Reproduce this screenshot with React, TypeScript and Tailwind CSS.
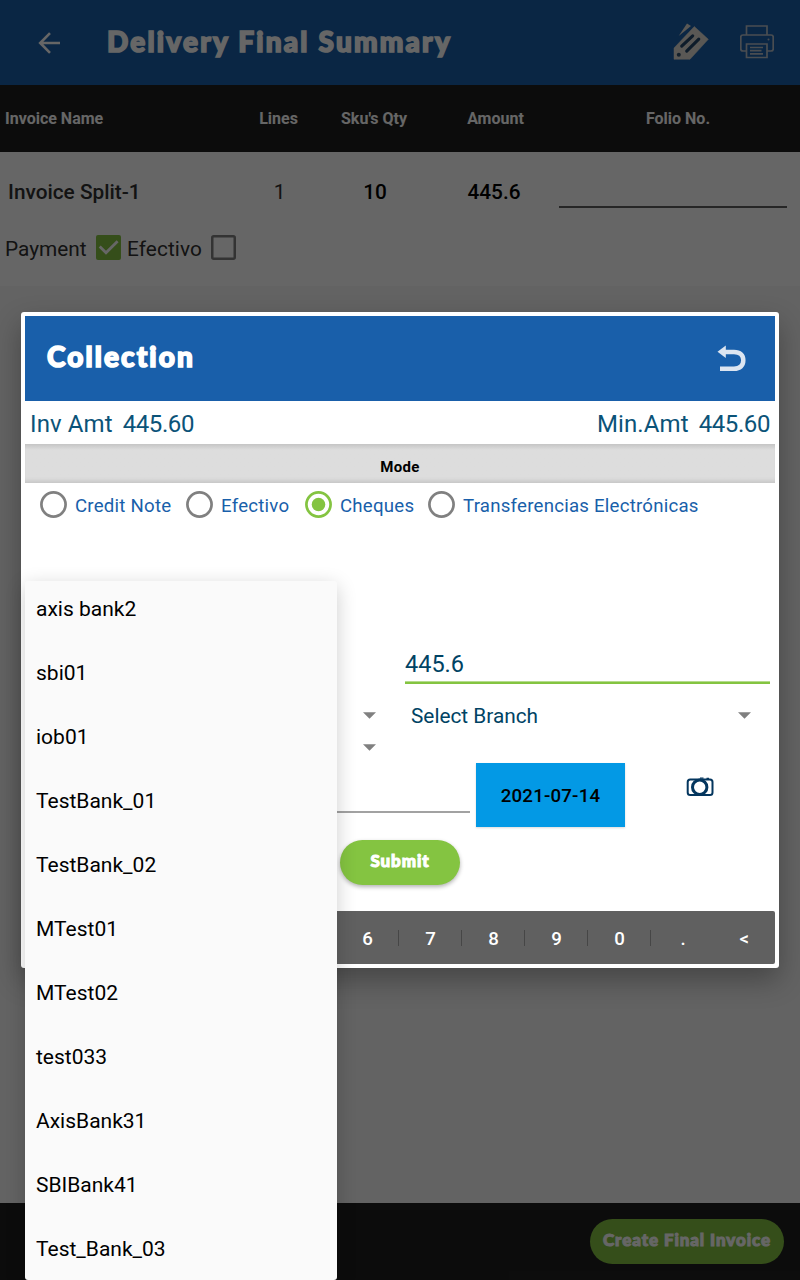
import React from "react";

const banks = [
  "axis bank2", "sbi01", "iob01", "TestBank_01", "TestBank_02", "MTest01",
  "MTest02", "test033", "AxisBank31", "SBIBank41", "Test_Bank_03",
];
// The open bank list covers the left half of the keypad.
const keys = ["", "", "", "", "", "6", "7", "8", "9", "0", "."];

function Arrow({ className = "" }: { className?: string }) {
  return (
    <svg width="13" height="7" viewBox="0 0 13 7" className={`shrink-0 ${className}`}>
      <path d="M0 0.2H13L6.5 6.8Z" fill="#808080" />
    </svg>
  );
}

function Radio({ label, checked = false, className = "" }: { label: string; checked?: boolean; className?: string }) {
  return (
    <label className={`flex shrink-0 items-center ${className}`}>
      <svg width="27" height="27" viewBox="0 0 27 27" fill="none">
        <circle cx="13.5" cy="13.5" r="12.1" stroke={checked ? "#84c441" : "#808080"} strokeWidth="2.7" />
        {checked && <circle cx="13.5" cy="13.5" r="6.8" fill="#84c441" />}
      </svg>
      <span className="ml-[8px] whitespace-nowrap pt-[2px] text-[18.67px] leading-6 tracking-[0.22px] text-[#195faa]">{label}</span>
    </label>
  );
}

function Header() {
  return (
    <header className="flex h-[85px] items-center bg-[#195faa] pl-[38px] text-white">
      <svg width="22" height="22" viewBox="0 0 22 22" fill="none" stroke="#fff" strokeWidth="2.6">
        <path d="M22 11H2.500M12 1.200 2.200 11l9.800 9.800" />
      </svg>
      <h1 className="ml-[47px] mt-[-4px] w-[420px] whitespace-nowrap font-['Lato'] text-[28px] leading-10 font-black tracking-[2.2px] [-webkit-text-stroke:1.6px_white]">
        Delivery Final Summary
      </h1>
      <svg className="ml-[146px] mt-[-3px] shrink-0" width="36" height="38" viewBox="0 0 36 38" fill="none">
        <path d="M5.700 14 14 1.500 18 4Z" fill="#e0dcd4" />
        <path d="M1 26 21.300 4.500 35.300 17.300 17 37.300H1Z" fill="#e0dcd4" stroke="#e0dcd4" strokeWidth="0.500" strokeLinejoin="round" />
        <circle cx="5.800" cy="32.800" r="2" fill="#30506f" />
        <path d="M8.700 24.200 19.700 13.800M13.700 29.200 25.800 17.200" stroke="#24466a" strokeWidth="3.100" strokeLinecap="round" />
      </svg>
      <svg className="ml-[31px] mt-[-2px] shrink-0" width="34" height="34" viewBox="0 0 34 34" fill="none" stroke="#b9c1ca" strokeWidth="1.700">
        <path d="M6.500 10V1H27v9M6.500 26H3q-2.200 0-2.200-2V12q0-2 2.200-2h28q2.200 0 2.200 2v12q0 2-2.200 2h-4" />
        <path d="M6.500 19H27v13.500H6.500Z" />
        <path d="M10 22.500h13M10 25.700h11.500M10 28.900h13" />
        <circle cx="28.500" cy="14.500" r="1" fill="#b9c1ca" stroke="none" />
      </svg>
    </header>
  );
}

function Invoices() {
  return (
    <section className="h-[134px] bg-white text-[20.8px] text-[#303030]">
      <div className="flex h-[79px] items-center">
        <div className="w-[243px] pl-2 pt-[2px] font-medium">Invoice Split-1</div>
        <div className="w-[73px] pt-[2px] text-center">1</div>
        <div className="w-[118px] pt-[2px] text-center font-medium text-black">10</div>
        <div className="w-[120px] pt-[2px] text-center font-medium text-black">445.6</div>
        <div className="ml-[5px] mt-[31px] h-[1.500px] w-[228px] bg-[#606060]" />
      </div>
      <div className="flex h-[34px] items-center pl-[5px]">
        <span className="w-[91px] pt-[3px]">Payment</span>
        <svg width="25" height="25" viewBox="0 0 25 25" className="mt-[-1px]"><rect width="25" height="25" rx="2" fill="#84c441" /><path d="m3.700 11.500 6.300 6.300L21.600 6.200" fill="none" stroke="#fff" strokeWidth="2.800" /></svg>
        <span className="ml-[6px] w-[84px] pt-[3px] tracking-[0.1px]">Efectivo</span>
        <svg width="25" height="25" viewBox="0 0 25 25" className="mt-[-1px]"><rect x="1.250" y="1.250" width="22.500" height="22.500" rx="1.500" fill="none" stroke="#808080" strokeWidth="2.500" /></svg>
      </div>
    </section>
  );
}

function Collection() {
  return (
    <div className="absolute left-[21px] top-[312px] flex h-[656px] w-[758px] flex-col rounded-[3px] bg-white p-1 shadow-[0_12px_28px_rgba(0,0,0,0.3)]">
      <div className="flex h-[85px] shrink-0 items-center justify-between bg-[#195faa] pl-[22px] pr-[28px]">
        <h2 className="mt-[-5px] font-['Lato'] text-[28px] leading-10 font-black tracking-[2.1px] text-white [-webkit-text-stroke:1.6px_white]">Collection</h2>
        <svg width="30" height="27" viewBox="0 0 30 27" fill="none" className="mt-[-1px]">
          <path d="M6 7h11c6 0 9.300 3 9.300 8.300S23 23.700 17 23.700H3" stroke="#dce5f1" strokeWidth="4.500" />
          <path d="M0.500 6.800 8.800 0.500v12.600Z" fill="#dce5f1" />
        </svg>
      </div>
      <div className="flex h-[43px] shrink-0 items-center justify-between px-[5px] pt-[3px] text-[24px] text-[#0b5378]">
        <span className="flex gap-[10px]"><span className="tracking-[0.1px]">Inv Amt</span><span className="tracking-[-0.4px]">445.60</span></span>
        <span className="flex gap-[10px]"><span className="tracking-[0.1px]">Min.Amt</span><span className="tracking-[-0.4px]">445.60</span></span>
      </div>
      <div className="flex h-[39px] shrink-0 items-center justify-center bg-linear-to-b from-[#c5c5c5] via-[#dddddd] via-15% to-[#dddddd] pt-[8px] text-[15px] font-bold tracking-[0.4px] shadow-[inset_0_-5px_4px_-3px_#c3c3c3]">Mode</div>
      <div className="flex h-[43px] shrink-0 items-center pl-[15px]">
        <Radio label="Credit Note" className="w-[146px]" />
        <Radio label="Efectivo" className="w-[119px]" />
        <Radio label="Cheques" checked className="w-[123px]" />
        <Radio label="Transferencias Electrónicas" />
      </div>
      <div className="ml-[380px] mt-[119px] flex h-[39px] w-[365px] shrink-0 flex-col justify-between text-[23.500px] leading-[36px] text-[#004364]">
        <span className="h-[36px] pt-px">445.6</span>
        <span className="h-[3px] bg-linear-to-b from-[#b5dc8d] from-30% to-[#84c441] to-35%" />
      </div>
      <div className="flex h-[64px] shrink-0">
        <div className="flex w-[380px] flex-col items-end gap-[25px] pr-[29.500px] pt-[28px]"><Arrow /><Arrow /></div>
        <div className="flex flex-1 items-start justify-between pl-[6px] pr-[24.500px] pt-[16px] text-[20.8px] leading-8 text-[#004364]">
          <span>Select Branch</span><Arrow className="mt-[12px]" />
        </div>
      </div>
      <div className="mt-[15px] flex h-[64px] shrink-0">
        <div className="mb-[14px] w-[445px] border-b-2 border-[#a2a2a2]" />
        <button className="ml-[6px] w-[149px] bg-[#0399e5] pt-[2px] text-[18.67px] font-medium tracking-[0.2px] text-black shadow-[0_1px_2px_rgba(0,0,0,0.15)]">2021-07-14</button>
        <svg className="ml-[61px] mt-[14px]" width="28" height="20" viewBox="0 0 28 20" fill="none" stroke="#04365e">
          <rect x="1.700" y="2.500" width="24.800" height="15.500" rx="2.500" strokeWidth="2" />
          <circle cx="13.700" cy="10.200" r="7.200" fill="#fff" strokeWidth="3" />
          <path d="M14 1.200h3.500M20.500 1.400h2.500" strokeWidth="1.200" />
        </svg>
      </div>
      <button className="mt-[13px] h-[45px] w-[120px] shrink-0 self-center rounded-full bg-[#84c441] pb-[4px] font-['Lato'] text-[17px] font-black tracking-[0.9px] text-white shadow-[0_2px_4px_rgba(0,0,0,0.3)] [-webkit-text-stroke:1px_white]">Submit</button>
      <div className="mt-auto flex h-[53px] shrink-0 items-center rounded-[2px] bg-[#606060] text-[18.67px] font-medium text-white">
        {keys.map((key, i) => (
          <div key={i} className={`flex h-4 shrink-0 items-center justify-center pl-[2px] pt-[3px] ${i === 0 ? "w-[58.5px]" : "w-[63px]"} ${i < 10 ? "border-r border-[#464646]" : ""}`}>{key}</div>
        ))}
        <div className="flex-1 pt-[3px] text-center">&lt;</div>
      </div>
    </div>
  );
}

export default function App() {
  return (
    <main className="relative flex h-[1280px] w-[800px] flex-col overflow-hidden bg-[#f8f8f8] font-['Roboto',sans-serif]">
      <Header />
      <div className="flex h-[67px] shrink-0 items-center bg-[#202020] text-[16px] font-bold text-white">
        <div className="w-[243px] pl-[5px]">Invoice Name</div>
        <div className="w-[71px] text-center">Lines</div>
        <div className="w-[120px] text-center">Sku's Qty</div>
        <div className="w-[123px] text-center">Amount</div>
        <div className="flex-1 pr-px text-center">Folio No.</div>
      </div>
      <Invoices />
      <footer className="mt-auto flex h-[77px] items-center justify-end bg-[#202020] pr-4">
        <button className="h-[45px] w-[194px] rounded-full bg-[#84c441] pb-[4px] font-['Lato'] text-[17px] font-black tracking-[0.9px] whitespace-nowrap text-white [-webkit-text-stroke:1px_white]">Create Final Invoice</button>
      </footer>
      <div className="absolute inset-0 bg-black/60" />
      <Collection />
      <div className="absolute left-[25px] top-[581px] h-[699px] w-[312px] overflow-hidden rounded-[3px] bg-[#fafafa] text-[21px] text-black shadow-[0_5px_20px_rgba(0,0,0,0.2)]">
        <ul className="mt-[-3px]">
          {banks.map((bank) => <li key={bank} className="flex h-16 items-center pl-[11px]">{bank}</li>)}
        </ul>
      </div>
    </main>
  );
}
